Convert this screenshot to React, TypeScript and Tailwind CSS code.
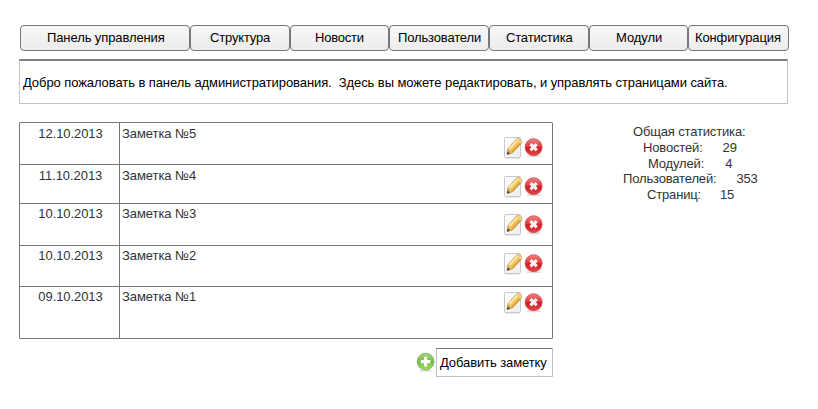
const menu = [
  { label: 'Панель управления', cls: 'w-[170px] pl-[26px] tracking-[-0.1px]' },
  { label: 'Структура', cls: 'w-[100px] pl-[19px] tracking-[-0.17px]' },
  { label: 'Новости', cls: 'w-[99px] pl-[24px] tracking-[-0.2px]' },
  { label: 'Пользователи', cls: 'w-[100px] pl-[8px] tracking-[-0.15px]' },
  { label: 'Статистика', cls: 'w-[100px] pl-[16px] tracking-[-0.17px]' },
  { label: 'Модули', cls: 'w-[99px] pl-[26px] tracking-[-0.07px]' },
  { label: 'Конфигурация', cls: 'w-[101px] pl-[6px] tracking-[-0.12px]' },
];

const notes = [
  { date: '12.10.2013', title: 'Заметка №5', row: 'h-[42px] border-b', text: 'pt-[3px]', icons: 'pt-[13px]' },
  { date: '11.10.2013', title: 'Заметка №4', row: 'h-[39px] border-b', text: 'pt-[3px]', icons: 'pt-[10px]' },
  { date: '10.10.2013', title: 'Заметка №3', row: 'h-[42px] border-b', text: 'pt-[2px]', icons: 'pt-[9px]' },
  { date: '10.10.2013', title: 'Заметка №2', row: 'h-[41px] border-b', text: 'pt-[2px]', icons: 'pt-[6px]' },
  { date: '09.10.2013', title: 'Заметка №1', row: 'h-[51px]', text: 'pt-[2px]', icons: 'pt-[4px]' },
];

const stats = [
  { text: 'Общая статистика:', value: '', pad: 'pl-[33px]', gap: '' },
  { text: 'Новостей:', value: '29', pad: 'pl-[43px]', gap: 'ml-[20px]' },
  { text: 'Модулей:', value: '4', pad: 'pl-[48px]', gap: 'ml-[21px]' },
  { text: 'Пользователей:', value: '353', pad: 'pl-[23px]', gap: 'ml-[20px]' },
  { text: 'Страниц:', value: '15', pad: 'pl-[47px]', gap: 'ml-[19px]' },
];

function EditIcon() {
  return (
    <svg width="20" height="24" viewBox="0 0 20 24" className="shrink-0">
      <defs>
        <linearGradient id="paper" x1="0" y1="0" x2="1" y2="1">
          <stop offset="0" stopColor="#ffffff" />
          <stop offset="1" stopColor="#ededf0" />
        </linearGradient>
      </defs>
      <rect x="1.5" y="1.5" width="16" height="20" rx="1" fill="url(#paper)" stroke="#c8c8cc" />
      <path d="M2 22.4h15" stroke="#e0e0e0" strokeWidth="0.8" />
      <path d="M4 18.6 4.8 12.8 13.2 3.2Q15.4 1.2 17.6 3 19.6 5 18.4 7.4L9.6 17Z" fill="#efc35a" stroke="#c49a4c" strokeWidth="0.7" />
      <path d="M6.4 13 14.6 4.2" stroke="#fbe6a4" strokeWidth="2" />
      <path d="M9.2 16 17.4 7.2" stroke="#d6a03a" strokeWidth="1.3" />
      <path d="M4 18.6 4.8 13.2 9.4 16.9Z" fill="#cfae70" />
      <path d="M4 18.8 4.4 15.2 7.2 17.8Z" fill="#55493a" />
      <path d="M13.8 2.8Q15.8 1.4 17.6 3 19.6 5 18.4 7.2L17.8 7.8 13 3.6Z" fill="#efcf9a" opacity="0.8" />
    </svg>
  );
}

function DeleteIcon() {
  return (
    <svg width="20" height="24" viewBox="0 0 20 24" className="shrink-0">
      <defs>
        <linearGradient id="red" x1="0" y1="0" x2="0" y2="1">
          <stop offset="0" stopColor="#ee8585" />
          <stop offset="0.45" stopColor="#db3f42" />
          <stop offset="0.55" stopColor="#cf1c22" />
          <stop offset="1" stopColor="#e34a4d" />
        </linearGradient>
      </defs>
      <ellipse cx="10.8" cy="20.2" rx="7.5" ry="1.2" fill="#e2dcdc" />
      <circle cx="10.6" cy="11.2" r="8.5" fill="url(#red)" stroke="#d4494c" strokeWidth="0.8" />
      <path d="M8.6 9.2 12.6 13.2M12.6 9.2 8.6 13.2" stroke="#fbf3f3" strokeWidth="3.2" strokeLinecap="square" />
    </svg>
  );
}

function AddIcon() {
  return (
    <svg width="20" height="22" viewBox="0 0 20 22" className="shrink-0">
      <defs>
        <linearGradient id="green" x1="0" y1="0" x2="0" y2="1">
          <stop offset="0" stopColor="#a5d684" />
          <stop offset="0.5" stopColor="#74be44" />
          <stop offset="1" stopColor="#9ee062" />
        </linearGradient>
      </defs>
      <ellipse cx="10.6" cy="18.6" rx="7" ry="1.2" fill="#dddddd" />
      <circle cx="10.6" cy="9.6" r="8.4" fill="url(#green)" stroke="#7fb05c" strokeWidth="0.9" />
      <path d="M10.6 4.8v9.6M5.8 9.6h9.6" stroke="#fafff6" strokeWidth="3.2" />
    </svg>
  );
}

export default function App() {
  return (
    <div className="h-[409px] w-[818px] overflow-hidden bg-white pl-[19px] pt-[25px] font-['Liberation_Sans',Arial,sans-serif] text-[13px] leading-[16px] tracking-[-0.07px] text-black">
      <nav className="ml-px flex h-[26px]">
        {menu.map((m) => (
          <button
            key={m.label}
            className={`${m.cls} h-[26px] rounded-[4px] border border-[#777777] bg-linear-to-b from-[#f8f8f8] to-[#ececec] pb-px text-left leading-[23px] whitespace-nowrap`}
          >
            {m.label}
          </button>
        ))}
      </nav>

      <section className="mt-2 h-[45px] w-[769px] border border-t-2 border-[#c4c4c4] border-t-[#808080] pt-[14px] pl-[3px] tracking-[-0.08px] whitespace-pre">
        Добро пожаловать в панель администратирования.{'  '}Здесь вы можете редактировать, и управлять страницами сайта.
      </section>

      <main className="mt-[18px] flex text-[#333333]">
        <div className="w-[534px]">
          <div className="rounded-[1px] border border-[#777777]">
            {notes.map((n) => (
              <div key={n.title} className={`${n.row} flex border-[#777777]`}>
                <div className={`${n.text} w-[100px] border-r border-[#777777] pl-[2px] text-center`}>{n.date}</div>
                <div className={`${n.text} grow pl-[2px]`}>{n.title}</div>
                <div className={`${n.icons} flex pr-[9px]`}>
                  <EditIcon />
                  <DeleteIcon />
                </div>
              </div>
            ))}
          </div>
          <div className="mt-[9px] flex justify-end text-black">
            <div className="mr-px pt-1">
              <AddIcon />
            </div>
            <button className="h-[29px] w-[117px] rounded-[1px] border border-[#c0c0c0] border-t-[#777777] pl-[3px] text-left tracking-[-0.1px] whitespace-nowrap">
              Добавить заметку
            </button>
          </div>
        </div>
        <aside className="ml-[47px] pt-[2px] leading-[15.75px] tracking-[-0.16px]">
          {stats.map((s) => (
            <div key={s.text} className={s.pad}>
              {s.text}
              {s.value && <span className={s.gap}>{s.value}</span>}
            </div>
          ))}
        </aside>
      </main>
    </div>
  );
}
